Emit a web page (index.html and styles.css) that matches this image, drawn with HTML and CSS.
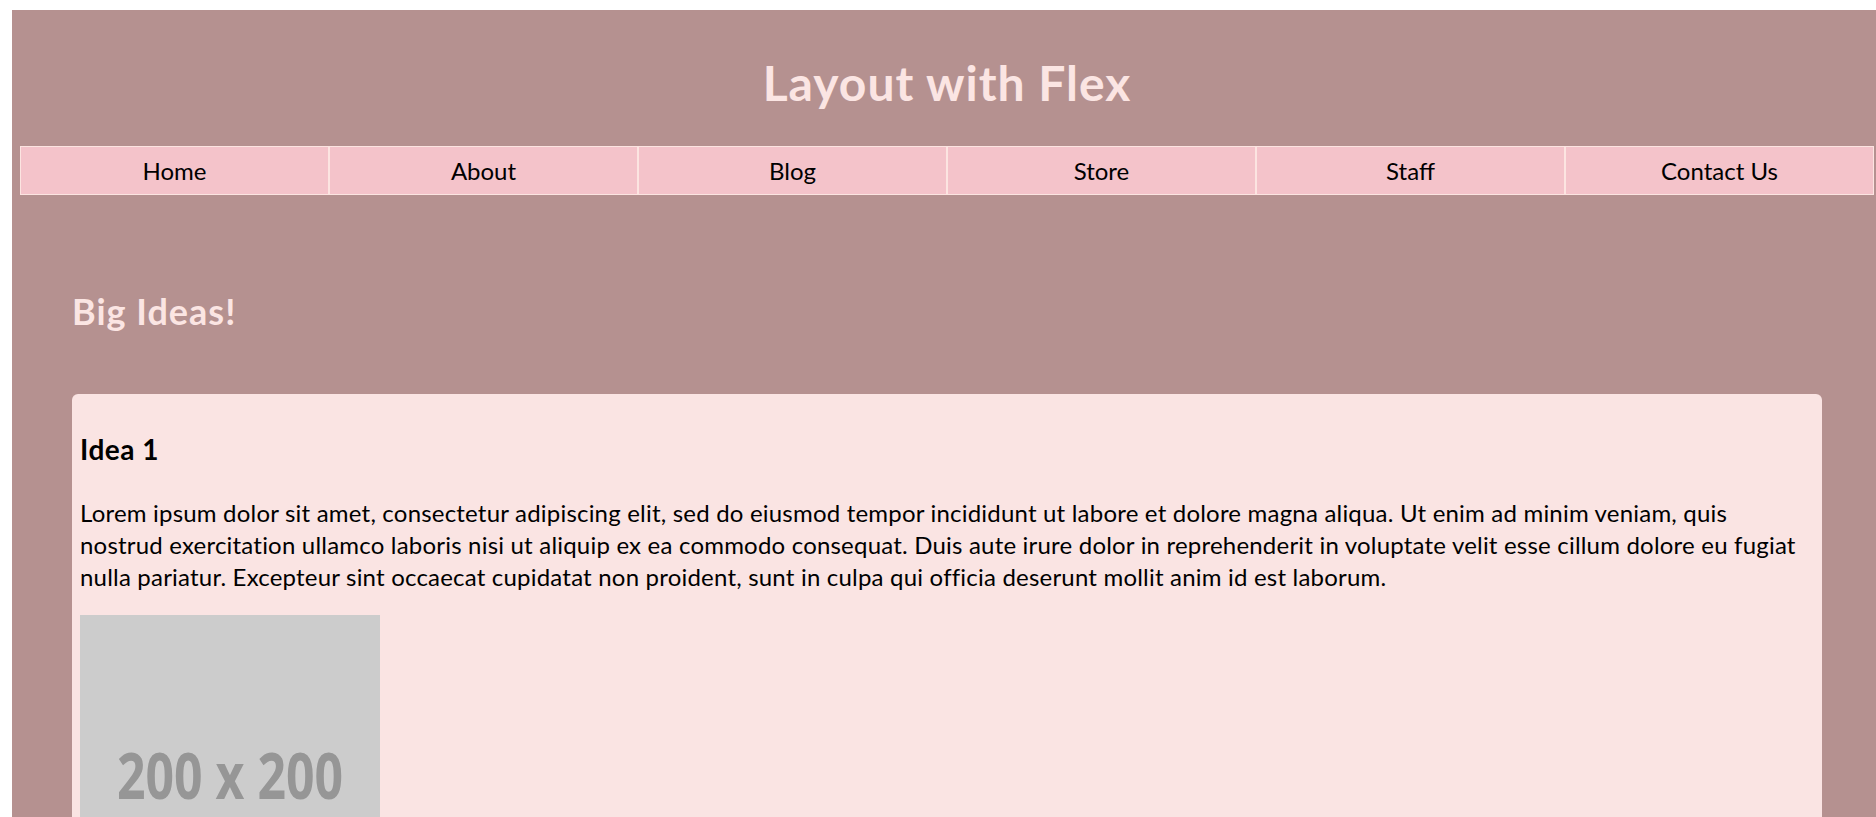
FILE: index.html
```html
<!DOCTYPE html>
<html lang="en">
<head>
<meta charset="utf-8">
<title>Layout with Flex</title>
<link rel="stylesheet" href="styles.css">
</head>
<body>
<div class="page">
  <header class="header">
    <h1 class="title">Layout with Flex</h1>
    <nav class="nav">
      <a class="nav-item" href="#">Home</a>
      <a class="nav-item" href="#">About</a>
      <a class="nav-item" href="#">Blog</a>
      <a class="nav-item" href="#">Store</a>
      <a class="nav-item" href="#">Staff</a>
      <a class="nav-item" href="#">Contact Us</a>
    </nav>
  </header>
  <main class="main">
    <h2 class="section-title">Big Ideas!</h2>
    <article class="card">
      <h3 class="card-title">Idea 1</h3>
      <p class="card-text">Lorem ipsum dolor sit amet, consectetur adipiscing elit, sed do eiusmod tempor incididunt ut labore et dolore magna aliqua. Ut enim ad minim veniam, quis nostrud exercitation ullamco laboris nisi ut aliquip ex ea commodo consequat. Duis aute irure dolor in reprehenderit in voluptate velit esse cillum dolore eu fugiat nulla pariatur. Excepteur sint occaecat cupidatat non proident, sunt in culpa qui officia deserunt mollit anim id est laborum.</p>
      <svg class="placeholder" width="300" height="300" viewBox="0 0 300 300" role="img" aria-label="200 x 200">
        <rect width="300" height="300" fill="#cccccc"/>
        <text x="150" y="184" text-anchor="middle" textLength="226" lengthAdjust="spacingAndGlyphs" class="placeholder-text">200 x 200</text>
      </svg>
    </article>
  </main>
</div>
</body>
</html>
```

FILE: styles.css
```css
html, body {
  overflow-x: hidden;
}

body {
  margin: 0;
  background: #ffffff;
  font-family: Lato, "Open Sans", sans-serif;
  font-size: 24px;
  color: #000000;
}

.page {
  margin: 10px -6px 0 12px;
  background: #b59190;
  min-height: 900px;
}

.header {
  padding-top: 41px;
}

.title {
  margin: 0;
  font-size: 48px;
  line-height: 64px;
  font-weight: 700;
  letter-spacing: 1px;
  text-align: center;
  color: #fbe5e3;
}

.nav {
  display: flex;
  margin: 31px 8px 0 8px;
}

.nav-item {
  flex: 1 1 0;
  border: 1px solid #fce4e1;
  background: #f4c3ca;
  color: #000000;
  text-decoration: none;
  text-align: center;
  font-size: 24px;
  line-height: 32px;
  padding: 8px 0 7px;
}

.main {
  padding: 92px 60px 0 60px;
}

.section-title {
  margin: 0 0 59px;
  font-size: 36px;
  line-height: 48px;
  font-weight: 700;
  letter-spacing: 1px;
  color: #fbe5e3;
}

.card {
  background: #fae4e3;
  border-radius: 6px;
  padding: 8px;
  min-height: 600px;
}

.card-title {
  margin: 29px 0 0;
  font-size: 28px;
  line-height: 37px;
  font-weight: 700;
  letter-spacing: 0.5px;
}

.card-text {
  margin: 29px 0 22px;
  line-height: 32px;
  letter-spacing: 0.2px;
}

.placeholder {
  display: block;
}

.placeholder-text {
  font-family: "Open Sans", "DejaVu Sans Condensed", sans-serif;
  font-weight: 700;
  font-size: 64px;
  fill: #969696;
}
```
